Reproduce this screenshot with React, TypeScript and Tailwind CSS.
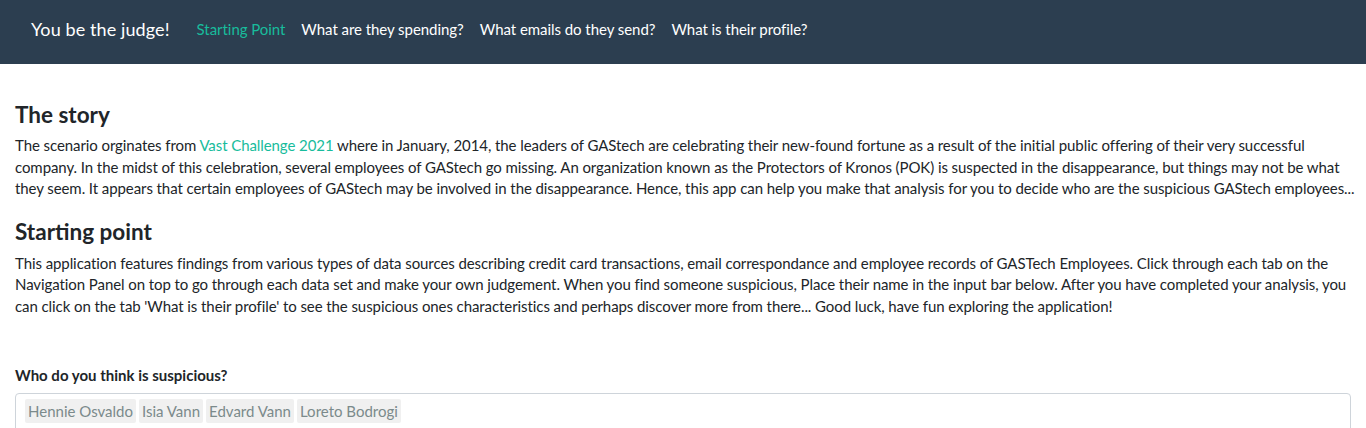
import React from "react";

const navLinks = [
  { label: "Starting Point", active: true },
  { label: "What are they spending?", active: false },
  { label: "What emails do they send?", active: false },
  { label: "What is their profile?", active: false },
];

const suspects = ["Hennie Osvaldo", "Isia Vann", "Edvard Vann", "Loreto Bodrogi"];

const App: React.FC = () => {
  return (
    <div
      className="bg-white min-h-screen text-[#212529] text-[15px]"
      style={{ fontFamily: "Lato, 'Open Sans', sans-serif" }}
    >
      {/* Top navigation */}
      <nav className="h-16 bg-[#2c3e50] flex items-center pl-[31px] pb-1.5">
        <span className="text-white text-[18px] tracking-[0.1px] mr-[19px]">You be the judge!</span>
        <ul className="flex items-center tracking-[-0.05px]">
          {navLinks.map((link) => (
            <li key={link.label}>
              <a
                href="#"
                className={
                  link.active
                    ? "px-2 text-[#18bc9c]"
                    : "px-2 text-white"
                }
              >
                {link.label}
              </a>
            </li>
          ))}
        </ul>
      </nav>

      <main className="px-[15px] pt-[35px]">
        <h3 className="text-[22.5px] font-bold leading-[31px] mb-[5px]">The story</h3>
        <p className="leading-[21.5px] mb-4 tracking-[-0.08px] -mr-[10px]">
          The scenario orginates from{" "}
          <a href="#" className="text-[#18bc9c]">
            Vast Challenge 2021
          </a>{" "}
          where in January, 2014, the leaders of GAStech are celebrating their new-found fortune as a
          result of the initial public offering of their very successful company. In the midst of this
          celebration, several employees of GAStech go missing. An organization known as the Protectors
          of Kronos (POK) is suspected in the disappearance, but things may not be what they seem. It
          appears that certain employees of GAStech may be involved in the disappearance. Hence, this
          app can help you make that analysis for you to decide who are the suspicious GAStech
          employees...
        </p>

        <h3 className="text-[22.5px] font-bold leading-[31px] mb-[6px]">Starting point</h3>
        <p className="leading-[21.5px] tracking-[-0.08px]">
          This application features findings from various types of data sources describing credit card
          transactions, email correspondance and employee records of GASTech Employees. Click through
          each tab on the Navigation Panel on top to go through each data set and make your own
          judgement. When you find someone suspicious, Place their name in the input bar below. After
          you have completed your analysis, you can click on the tab 'What is their profile' to see the
          suspicious ones characteristics and perhaps discover more from there... Good luck, have fun
          exploring the application!
        </p>

        {/* Suspect input */}
        <div className="mt-[47px]">
          <label className="block font-bold text-[15px] leading-[22px] mb-[7px]">
            Who do you think is suspicious?
          </label>
          <div className="border border-[#ced4da] rounded-[4px] px-[9px] pt-[5px] pb-2 flex gap-[3px]">
            {suspects.map((name) => (
              <span
                key={name}
                className="bg-[#f0f0f0] text-[#7b8a8b] px-[3px] leading-[24px] rounded-[2px]"
              >
                {name}
              </span>
            ))}
          </div>
        </div>
      </main>
    </div>
  );
};

export default App;
